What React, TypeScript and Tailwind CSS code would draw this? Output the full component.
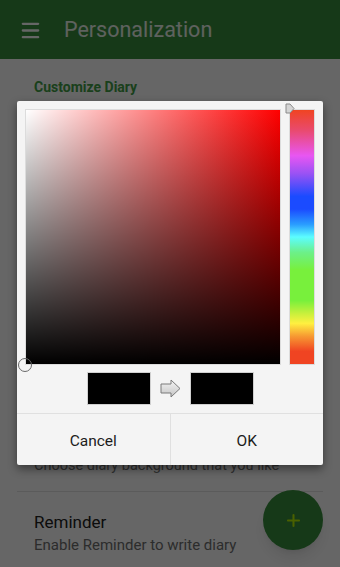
import { Menu, Plus } from "lucide-react";

const hueBar =
  "linear-gradient(to bottom, #f04422 0%, #e94a6e 8%, #e856f2 18%, #9a52f4 25%, #1b4bff 34%, #1b4bff 39%, #2a9cff 45%, #5cfdff 50%, #6cf08a 56%, #78f03c 63%, #78f03c 75%, #c6f03c 80%, #fff040 84%, #f79a32 89%, #f04422 95%, #f04422 100%)";

const App = () => {
  return (
    <div className="relative w-[340px] h-[567px] overflow-hidden bg-white" style={{ fontFamily: "Roboto, 'Noto Sans', sans-serif" }}>
      {/* page underneath */}
      <div className="h-[59px] bg-[#388e3c] flex items-center pl-[19px] pt-[2px] gap-[22px] text-white">
        <Menu size={23} strokeWidth={2.4} />
        <span className="text-[21.5px] text-white/90">Personalization</span>
      </div>
      <div className="px-[34px] pt-[18px]">
        <div className="text-[14px] font-bold text-[#43a047]">Customize Diary</div>
        <div className="h-[360px]" />
        <div className="text-[14.5px] text-[#757575] -mt-[3px]">Choose diary background that you like</div>
      </div>
      <div className="mx-[17px] mt-[14px] border-t border-[#e4e4e4]" />
      <div className="px-[34px] pt-[19px]">
        <div className="text-[17px] text-[#212121] leading-[22px]">Reminder</div>
        <div className="text-[15px] text-[#6f6f6f] leading-[20px] mt-[2px]">Enable Reminder to write diary</div>
      </div>
      <div className="absolute left-[263px] top-[490px] w-[60px] h-[60px] rounded-full bg-[#388e3c] shadow-lg flex items-center justify-center text-[#b8f000]">
        <Plus size={19} strokeWidth={2.6} />
      </div>

      {/* dim overlay */}
      <div className="absolute inset-0 bg-black/60" />

      {/* color picker dialog */}
      <div className="absolute left-[17px] top-[101px] w-[306px] h-[364px] bg-[#f4f4f4] rounded-[2px] shadow-[0_4px_10px_rgba(0,0,0,0.45)] flex flex-col">
        <div className="relative flex gap-[8px] pl-[8px] pt-[8px]">
          <div className="relative w-[256px] h-[256px] border border-[#dcdcdc]">
            <div className="absolute inset-0 bg-[#ff0000]" />
            <div className="absolute inset-0 bg-gradient-to-r from-white to-transparent" />
            <div className="absolute inset-0 bg-gradient-to-b from-transparent to-black" />
            <div className="absolute -left-[8px] bottom-[-8px] w-[14px] h-[14px] rounded-full border-[1.5px] border-[#6a6a6a]" />
          </div>
          <div className="relative w-[26px] h-[256px] border border-[#dcdcdc]" style={{ background: hueBar }}>
            <svg className="absolute -left-[5px] -top-[7px]" width="10" height="11" viewBox="0 0 10 11">
              <path d="M1 1 L5 1 L9 5.5 L5 10 L1 10 Z" fill="#d4d4d4" stroke="#8a8a8a" strokeWidth="1" />
            </svg>
          </div>
        </div>
        <div className="flex items-center justify-center gap-[9px] mt-[7px] ml-[1px]">
          <div className="w-[64px] h-[33px] bg-black border border-[#d0d0d0]" />
          <svg width="21" height="19" viewBox="0 0 21 19">
            <defs>
              <linearGradient id="ar" x1="0" y1="0" x2="0" y2="1">
                <stop offset="0" stopColor="#f4f4f4" />
                <stop offset="1" stopColor="#c4c4c4" />
              </linearGradient>
            </defs>
            <path d="M1 5 L11 5 L11 1 L20 9.5 L11 18 L11 14 L1 14 Z" fill="url(#ar)" stroke="#7a7a7a" strokeWidth="1" />
          </svg>
          <div className="w-[64px] h-[33px] bg-black border border-[#d0d0d0]" />
        </div>
        <div className="mt-[8px] flex-1 flex border-t border-[#e0e0e0]">
          <div className="flex-1 flex items-center justify-center pt-[4px] text-[15.5px] text-[#1c1c1c] border-r border-[#e0e0e0]">Cancel</div>
          <div className="flex-1 flex items-center justify-center pt-[4px] text-[15.5px] text-[#1c1c1c]">OK</div>
        </div>
      </div>
    </div>
  );
};

export default App;
